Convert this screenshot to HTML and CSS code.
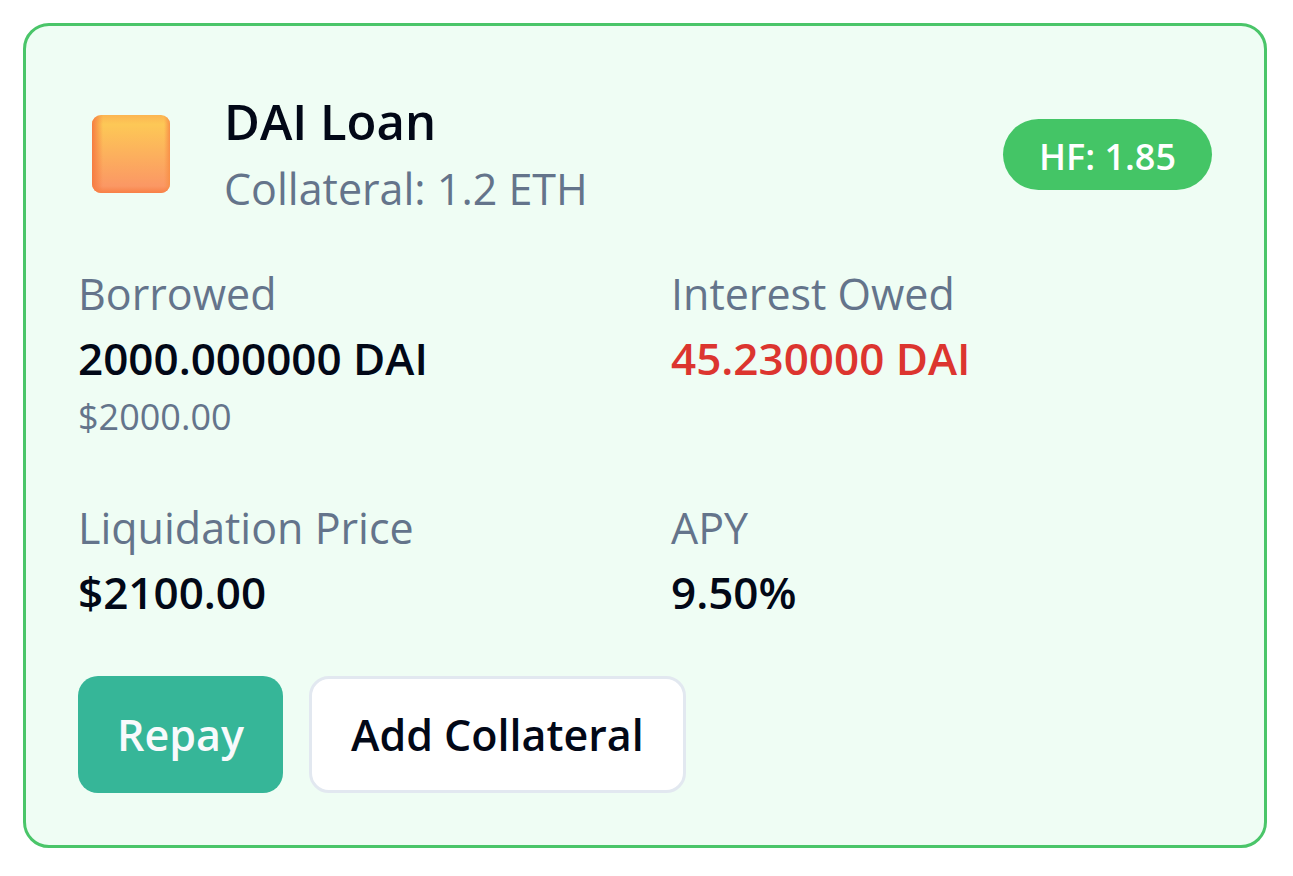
FILE: index.html
```html
<!DOCTYPE html>
<html lang="en">
<head>
    <meta charset="UTF-8">
    <meta name="viewport" content="width=device-width, initial-scale=1.0">
    <title>DAI Loan</title>
    <link rel="stylesheet" href="styles.css">
</head>
<body>
    <div class="loan-card">
        <div class="header">
            <svg class="token-icon" viewBox="0 0 78 78" aria-hidden="true">
                <defs>
                    <linearGradient id="tokenFill" x1="0" y1="0" x2="0" y2="1">
                        <stop offset="0" stop-color="#fcb552"/>
                        <stop offset="0.12" stop-color="#fdc856"/>
                        <stop offset="0.9" stop-color="#fb9864"/>
                    </linearGradient>
                    <linearGradient id="tokenLeft" x1="0" y1="0" x2="1" y2="0">
                        <stop offset="0" stop-color="#f67c42"/>
                        <stop offset="1" stop-color="#f67c42" stop-opacity="0"/>
                    </linearGradient>
                    <linearGradient id="tokenRight" x1="1" y1="0" x2="0" y2="0">
                        <stop offset="0" stop-color="#f89048"/>
                        <stop offset="1" stop-color="#f89048" stop-opacity="0"/>
                    </linearGradient>
                    <linearGradient id="tokenBase" x1="0" y1="1" x2="0" y2="0">
                        <stop offset="0" stop-color="#f88046"/>
                        <stop offset="1" stop-color="#f88046" stop-opacity="0"/>
                    </linearGradient>
                    <clipPath id="tokenShape">
                        <rect width="78" height="78" rx="9"/>
                    </clipPath>
                </defs>
                <g clip-path="url(#tokenShape)">
                    <rect width="78" height="78" fill="url(#tokenFill)"/>
                    <rect width="11" height="78" fill="url(#tokenLeft)"/>
                    <rect x="72" width="6" height="78" fill="url(#tokenRight)"/>
                    <rect y="71" width="78" height="7" fill="url(#tokenBase)"/>
                </g>
            </svg>
            <div class="title">
                <h1>DAI Loan</h1>
                <p>Collateral: 1.2 ETH</p>
            </div>
            <span class="health">HF: 1.85</span>
        </div>
        <dl class="stats">
            <div>
                <dt>Borrowed</dt>
                <dd>2000.000000 DAI</dd>
                <dd class="usd">$2000.00</dd>
            </div>
            <div>
                <dt>Interest Owed</dt>
                <dd class="owed">45.230000 DAI</dd>
            </div>
            <div>
                <dt>Liquidation Price</dt>
                <dd>$2100.00</dd>
            </div>
            <div>
                <dt>APY</dt>
                <dd>9.50%</dd>
            </div>
        </dl>
        <div class="actions">
            <button class="primary" type="button">Repay</button>
            <button type="button">Add Collateral</button>
        </div>
    </div>
</body>
</html>
```
FILE: styles.css
```css
* {
    box-sizing: border-box;
}
body {
    margin: 0;
    padding: 23px 26px 28px 23px;
    background-color: white;
    color: #020817;
    font-family: "Segoe UI", "Open Sans", "Noto Sans", sans-serif;
}
h1, p, dl, dt, dd {
    margin: 0;
}
.loan-card {
    padding: 60px 52px 52px;
    border: 3px solid #4ac569;
    border-radius: 26px;
    background-color: #effdf4;
}
.header {
    display: flex;
    align-items: center;
    margin-bottom: 39px;
}
.token-icon {
    width: 78px;
    height: 78px;
    margin: 0 54px 0 14px;
}
.title {
    flex: 1;
}
h1 {
    font-size: 49px;
    line-height: 70px;
    font-weight: 600;
}
.title p {
    color: #64748b;
    font-size: 43px;
    line-height: 66px;
}
.health {
    padding: 4px 36px 0;
    border-radius: 36px;
    background-color: #44c566;
    color: white;
    font-size: 36px;
    line-height: 67px;
    font-weight: 600;
}
.stats {
    display: grid;
    grid-template-columns: 1fr 1fr;
    gap: 52px;
}
dt, dd {
    line-height: 65px;
}
dt {
    color: #64748b;
    font-size: 43px;
}
dd {
    font-size: 44px;
    font-weight: 600;
}
.owed {
    color: #dc352f;
}
.usd {
    color: #64748b;
    font-size: 36px;
    line-height: 52px;
    font-weight: 400;
}
.actions {
    display: flex;
    gap: 26px;
    margin-top: 51px;
}
button {
    height: 117px;
    padding: 0 39px;
    border: 3px solid #e2e8f0;
    border-radius: 20px;
    background-color: white;
    color: #020817;
    font-family: inherit;
    font-size: 43px;
    font-weight: 600;
}
.primary {
    border: none;
    background-color: #36b698;
    color: #f8fafc;
}
```
